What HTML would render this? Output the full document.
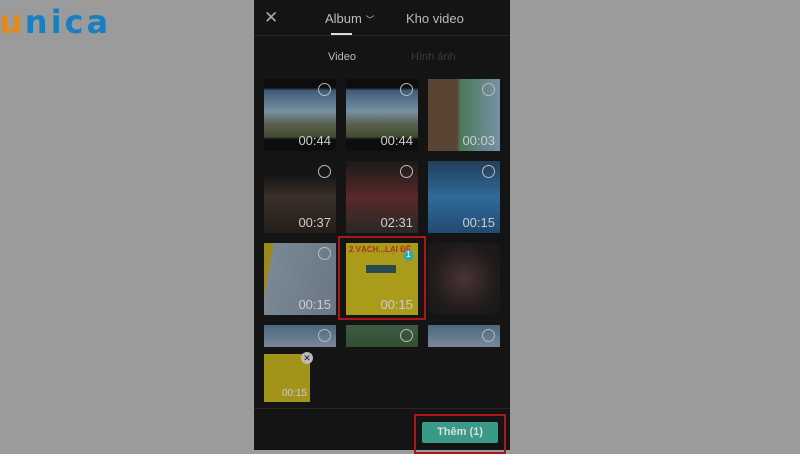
<!DOCTYPE html><html><head><style>
body{margin:0;width:800px;height:450px;background:#9b9b9b;position:relative;overflow:hidden;font-family:"Liberation Sans",sans-serif}
.a{position:absolute}
.ph{left:254px;top:0;width:256px;height:450px;background:#141414}
.t{position:absolute;width:72px;height:72px;overflow:hidden}
.d{position:absolute;right:5px;bottom:3px;color:#ccc;font-size:13px}
.c{position:absolute;right:5px;top:4px;width:11px;height:11px;border:1px solid #bbb;border-radius:50%}
.sky{background:linear-gradient(#0d0d0d 0,#0d0d0d 12%,#3e5c78 16%,#7890a0 45%,#5a6250 62%,#434c34 80%,#0d0d0d 84%)}
</style></head><body>
<div class="a" style="left:-1px;top:3px;font-size:32px;font-weight:bold;letter-spacing:3px;color:#1a7fc0;font-family:'DejaVu Sans',sans-serif"><span style="color:#e08a20">u</span>nica</div>
<div class="a ph"></div>
<div class="a" style="left:264px;top:8px;color:#aaa;font-size:17px">✕</div>
<div class="a" style="left:325px;top:11px;color:#bbb;font-size:13px">Album <span style="font-size:9px">﹀</span></div>
<div class="a" style="left:331px;top:33px;width:21px;height:2px;background:#ddd"></div>
<div class="a" style="left:406px;top:11px;color:#bbb;font-size:13px">Kho video</div>
<div class="a" style="left:254px;top:35px;width:256px;height:1px;background:#262626"></div>
<div class="a" style="left:328px;top:51px;color:#bbb;font-size:11px">Video</div>
<div class="a" style="left:411px;top:51px;color:#3a3a3a;font-size:11px">Hình ảnh</div>

<div class="t sky" style="left:264px;top:79px"><div class="c"></div><div class="d">00:44</div></div>
<div class="t sky" style="left:346px;top:79px"><div class="c"></div><div class="d">00:44</div></div>
<div class="t" style="left:428px;top:79px;background:linear-gradient(90deg,#5a4535 40%,#4a7a5a 45%,#7890a8)"><div class="c"></div><div class="d">00:03</div></div>
<div class="t" style="left:264px;top:161px;background:linear-gradient(#151515 20%,#3a3028 50%,#221e1a)"><div class="c"></div><div class="d">00:37</div></div>
<div class="t" style="left:346px;top:161px;background:linear-gradient(#1a1a1a,#5a2828 50%,#282828)"><div class="c"></div><div class="d">02:31</div></div>
<div class="t" style="left:428px;top:161px;background:linear-gradient(#223e5a,#306a9a 50%,#224a72)"><div class="c"></div><div class="d">00:15</div></div>
<div class="t" style="left:264px;top:243px;background:linear-gradient(100deg,#9a8a1c 10%,#7a8894 12%,#6a7886)"><div class="c"></div><div class="d">00:15</div></div>
<div class="a" style="left:338px;top:236px;width:88px;height:84px;border:2px solid #a81818;box-sizing:border-box"></div>
<div class="t" style="left:346px;top:243px;background:#aa9c1a"><div class="a" style="left:3px;top:2px;color:#b03020;font-size:8px;font-weight:bold;white-space:nowrap">2 VẠCH...LẠI ĐỀ</div><div class="a" style="left:57px;top:7px;width:11px;height:11px;border-radius:50%;background:#3aa8a0;color:#fff;font-size:8px;text-align:center">1</div><div class="a" style="left:20px;top:22px;width:30px;height:8px;background:#2a4a50"></div><div class="d">00:15</div></div>
<div class="t" style="left:428px;top:243px;background:radial-gradient(#4a3535,#221c1c 60%,#161616)"></div>
<div class="t" style="left:264px;top:325px;height:22px;background:linear-gradient(#4a6880,#7a8898)"><div class="c"></div></div>
<div class="t" style="left:346px;top:325px;height:22px;background:linear-gradient(#3e5a42,#324e32)"><div class="c"></div></div>
<div class="t" style="left:428px;top:325px;height:22px;background:linear-gradient(#4a6880,#7a8898)"><div class="c"></div></div>
<div class="a" style="left:264px;top:354px;width:46px;height:48px;background:#a29418;overflow:hidden"><div class="d" style="font-size:10px;right:3px">00:15</div></div>
<div class="a" style="left:301px;top:352px;width:12px;height:12px;border-radius:50%;background:#bbb;color:#222;font-size:9px;text-align:center;line-height:12px">✕</div>
<div class="a" style="left:254px;top:408px;width:256px;height:1px;background:#262626"></div>
<div class="a" style="left:422px;top:422px;width:76px;height:21px;background:#3a9a8a;border-radius:2px;color:#ddd;font-size:11px;font-weight:bold;text-align:center;line-height:21px">Thêm (1)</div>
<div class="a" style="left:414px;top:414px;width:92px;height:40px;border:2px solid #a81818;box-sizing:border-box"></div>
</body></html>
